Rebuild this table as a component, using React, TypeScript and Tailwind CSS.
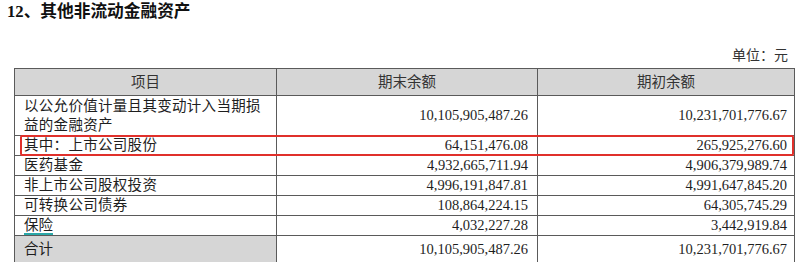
const rows = [
  { label: '其中：上市公司股份', end: '64,151,476.08', begin: '265,925,276.60', h: 'h-[20px]' },
  { label: '医药基金', end: '4,932,665,711.94', begin: '4,906,379,989.74', h: 'h-[19px]' },
  { label: '非上市公司股权投资', end: '4,996,191,847.81', begin: '4,991,647,845.20', h: 'h-[20px]' },
  { label: '可转换公司债券', end: '108,864,224.15', begin: '64,305,745.29', h: 'h-[20px]' },
];

export default function App() {
  return (
    <div className="w-[800px] h-[262px] bg-white overflow-hidden font-['Liberation_Serif','Noto_Sans_CJK_SC',serif] text-[#1e1e1e]">
      <h2 className="pl-[7px] pt-[3px] text-[16.7px] leading-[17px] font-bold text-[#111]">12、其他非流动金融资产</h2>

      <div className="flex justify-end pr-[12px] pt-[28px] text-[14px] leading-[16px] text-[#333]">
        单位：元
      </div>

      <div className="relative ml-[14px] mt-[4px] w-[781px]">
        <table className="w-full border-collapse table-fixed text-[14.5px] leading-[19px]">
          <colgroup>
            <col className="w-[262px]" />
            <col className="w-[261px]" />
            <col />
          </colgroup>
          <thead>
            <tr className="h-[27px] bg-[#d6d6d6] text-[#333]">
              <th className="border border-[#5a5a5a] font-normal text-center p-0">项目</th>
              <th className="border border-[#5a5a5a] font-normal text-center p-0">期末余额</th>
              <th className="border border-[#5a5a5a] font-normal text-center p-0">期初余额</th>
            </tr>
          </thead>
          <tbody>
            <tr className="h-[40px]">
              <td className="border border-[#5a5a5a] pl-[9px] pr-1 py-0 tracking-[0.3px]">
                以公允价值计量且其变动计入当期损
                <br />
                益的金融资产
              </td>
              <td className="border border-[#5a5a5a] text-right pr-[9px] py-0">10,105,905,487.26</td>
              <td className="border border-[#5a5a5a] text-right pr-[7px] py-0">10,231,701,776.67</td>
            </tr>
            {rows.map((r) => (
              <tr key={r.label} className={r.h}>
                <td className="border border-[#5a5a5a] pl-[9px] py-0 tracking-[0.3px]">{r.label}</td>
                <td className="border border-[#5a5a5a] text-right pr-[9px] py-0">{r.end}</td>
                <td className="border border-[#5a5a5a] text-right pr-[7px] py-0">{r.begin}</td>
              </tr>
            ))}
            <tr className="h-[20px]">
              <td className="border border-[#5a5a5a] pl-[9px] py-0">
                <span className="underline decoration-[#2aa7a7] decoration-2 underline-offset-[3px]">保险</span>
              </td>
              <td className="border border-[#5a5a5a] text-right pr-[9px] py-0">4,032,227.28</td>
              <td className="border border-[#5a5a5a] text-right pr-[7px] py-0">3,442,919.84</td>
            </tr>
            <tr className="h-[28px]">
              <td className="border border-[#5a5a5a] bg-[#d6d6d6] pl-[9px] py-0">合计</td>
              <td className="border border-[#5a5a5a] text-right pr-[9px] py-0">10,105,905,487.26</td>
              <td className="border border-[#5a5a5a] text-right pr-[7px] py-0">10,231,701,776.67</td>
            </tr>
          </tbody>
        </table>
        {/* red highlight box */}
        <div className="absolute left-[6px] right-[1px] top-[67px] h-[21px] border-2 border-[#e0302b] rounded-[2px] pointer-events-none" />
      </div>
    </div>
  );
}
